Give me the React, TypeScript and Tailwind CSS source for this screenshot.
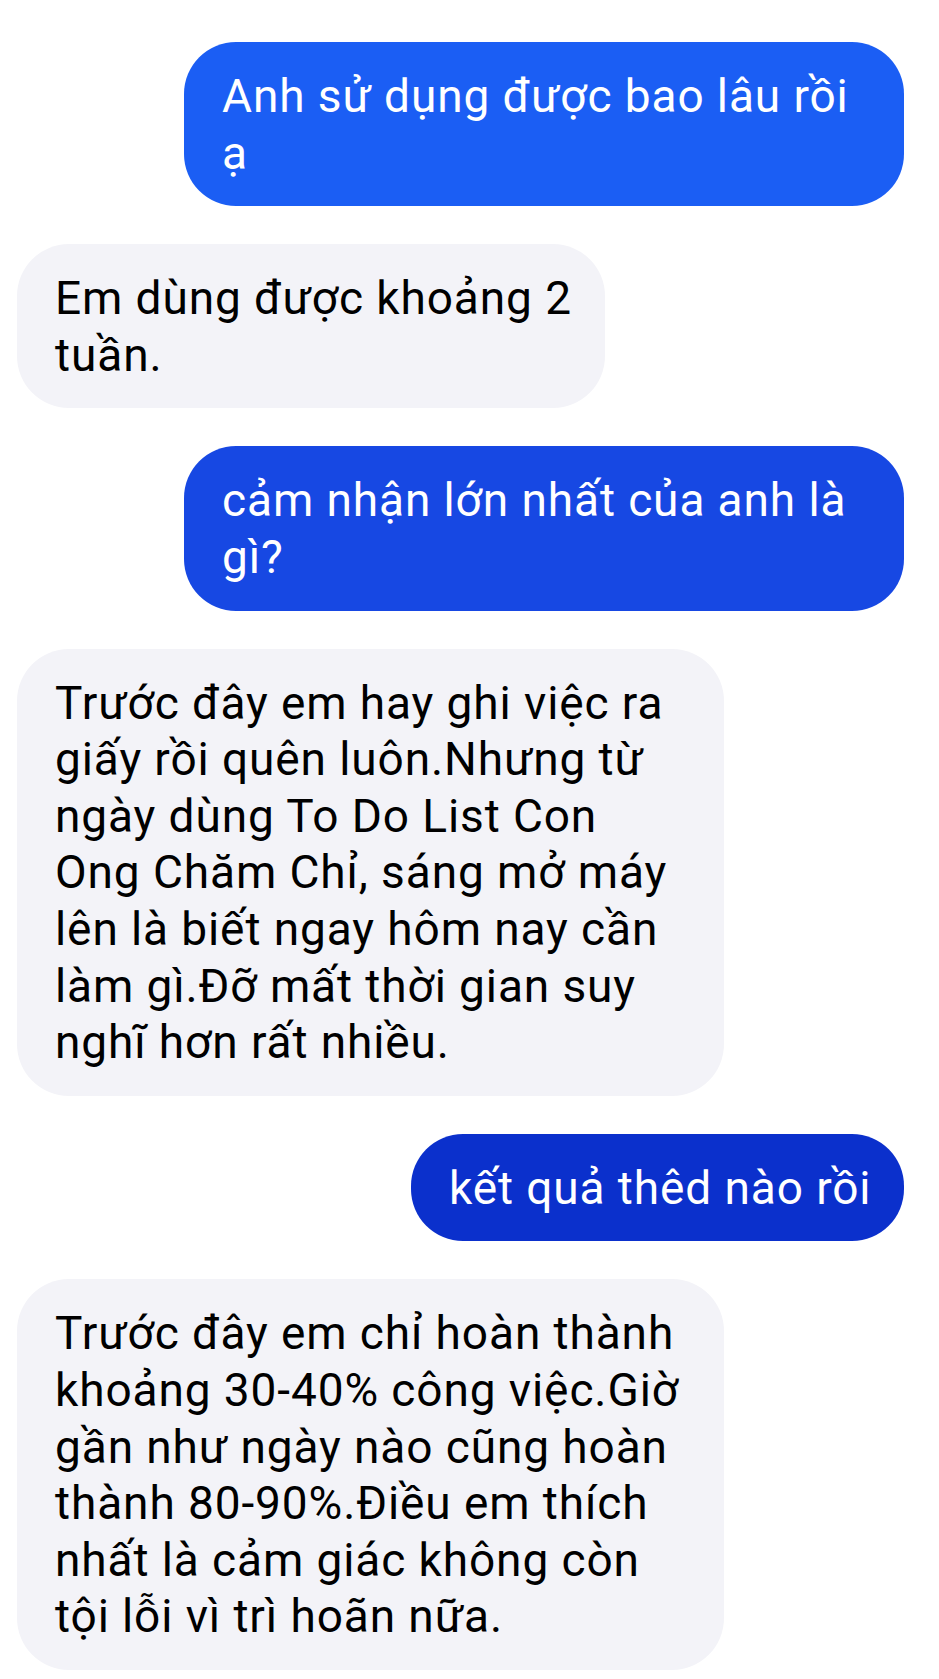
const messages = [
  {
    id: 1,
    mine: true,
    bg: "bg-[#1b5ef4]",
    width: "w-[720px]",
    lines: ["Anh sử dụng được bao lâu rồi", "ạ"],
  },
  {
    id: 2,
    mine: false,
    bg: "bg-[#f3f3f8]",
    width: "w-[588px]",
    lines: ["Em dùng được khoảng 2", "tuần."],
  },
  {
    id: 3,
    mine: true,
    bg: "bg-[#1748e3]",
    width: "w-[720px]",
    lines: ["cảm nhận lớn nhất của anh là", "gì?"],
  },
  {
    id: 4,
    mine: false,
    bg: "bg-[#f3f3f8]",
    width: "w-[707px]",
    lines: [
      "Trước đây em hay ghi việc ra",
      "giấy rồi quên luôn.Nhưng từ",
      "ngày dùng To Do List Con",
      "Ong Chăm Chỉ, sáng mở máy",
      "lên là biết ngay hôm nay cần",
      "làm gì.Đỡ mất thời gian suy",
      "nghĩ hơn rất nhiều.",
    ],
  },
  {
    id: 5,
    mine: true,
    bg: "bg-[#0b30cc]",
    width: "w-[493px]",
    lines: ["kết quả thêd nào rồi"],
  },
  {
    id: 6,
    mine: false,
    bg: "bg-[#f3f3f8]",
    width: "w-[707px]",
    lines: [
      "Trước đây em chỉ hoàn thành",
      "khoảng 30-40% công việc.Giờ",
      "gần như ngày nào cũng hoàn",
      "thành 80-90%.Điều em thích",
      "nhất là cảm giác không còn",
      "tội lỗi vì trì hoãn nữa.",
    ],
  },
];

const App = () => {
  return (
    <div className="min-h-screen w-[939px] bg-white pt-[42px] pl-[17px] pr-[35px] font-['Roboto',sans-serif]">
      <div className="flex flex-col gap-[38px]">
        {messages.map((msg) => (
          <div key={msg.id} className={msg.mine ? "flex justify-end" : "flex justify-start"}>
            <div
              className={`${msg.bg} ${msg.width} rounded-[52px] px-[38px] pt-[26px] pb-[25px] text-[46px] leading-[56.6px] tracking-[0.9px] whitespace-nowrap ${
                msg.mine ? "text-white" : "text-black"
              }`}
            >
              {msg.lines.map((line, i) => (
                <div key={i}>{line}</div>
              ))}
            </div>
          </div>
        ))}
      </div>
    </div>
  );
};

export default App;
